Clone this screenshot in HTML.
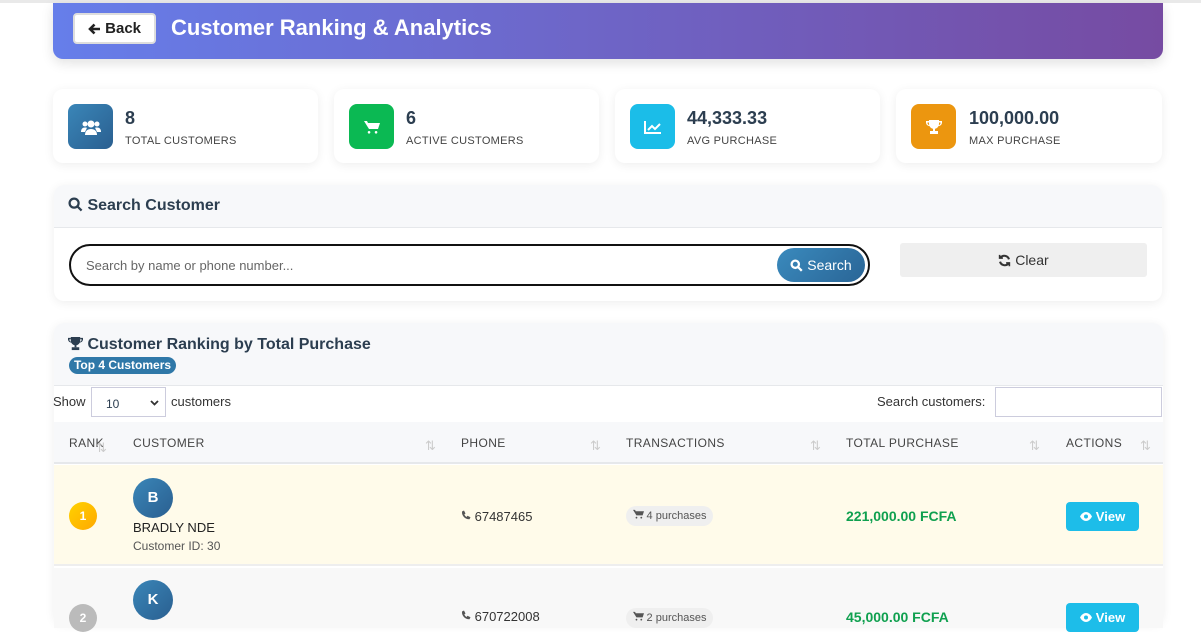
<!DOCTYPE html>
<html><head><meta charset="utf-8"><style>
*{box-sizing:border-box;margin:0;padding:0}
body{width:1201px;height:617px;overflow:hidden;background:#fff;font-family:"Liberation Sans",sans-serif;color:#2c3e50;position:relative}
.abs{position:absolute}
.hdr{left:53px;top:3px;width:1110px;height:56px;border-radius:0 0 10px 10px;background:linear-gradient(90deg,#667eea,#764ba2);box-shadow:0 4px 12px rgba(0,0,0,.12)}
.back{left:73px;top:13px;width:83px;height:31px;background:#fff;border:2px solid #ddd;border-radius:4px;font-weight:bold;font-size:15px;color:#222;display:flex;align-items:center;justify-content:center}
.title{left:171px;top:15px;color:#fff;font-weight:bold;font-size:22px}
.card{background:#fff;border-radius:10px;box-shadow:0 2px 10px rgba(0,0,0,.07)}
.ic{width:45px;height:45px;border-radius:8px;display:flex;align-items:center;justify-content:center}
.num{font-weight:bold;font-size:18px;color:#2c3e50}
.lbl{font-size:11px;color:#444;letter-spacing:.3px}
.th{font-size:12px;color:#444;letter-spacing:.4px;top:436px}
.sort{color:#ccc;font-size:13px;top:436px}
.view{width:73px;height:29px;border-radius:4px;background:#1dbde9;color:#fff;font-weight:bold;font-size:13px;display:flex;align-items:center;justify-content:center;gap:4px}
</style></head><body>
<div class="abs" style="left:0;top:0;width:1201px;height:3px;background:#e9e9e9"></div>
<div class="abs hdr"></div>
<div class="abs back"><svg width="13" height="12" viewBox="0 0 13 12" fill="none" stroke="#222" stroke-width="2.6"><path d="M12 6H2M6.5 1.5L2 6l4.5 4.5"/></svg>&nbsp;Back</div>
<div class="abs title">Customer Ranking &amp; Analytics</div>

<div class="abs card" style="left:53px;top:89px;width:265px;height:74px"></div>
<div class="abs card" style="left:334px;top:89px;width:265px;height:74px"></div>
<div class="abs card" style="left:615px;top:89px;width:265px;height:74px"></div>
<div class="abs card" style="left:896px;top:89px;width:266px;height:74px"></div>

<div class="abs ic" style="left:68px;top:104px;background:linear-gradient(135deg,#3a86b8,#2a5f90)"><svg width="20" height="16" viewBox="0 0 20 16" fill="#fff"><circle cx="10" cy="5" r="3.5"/><circle cx="4" cy="5" r="2.5"/><circle cx="16" cy="5" r="2.5"/><path d="M4 16c0-4 2.5-6 6-6s6 2 6 6z"/><path d="M0 13c0-3 1.5-4.5 4-4.5 1 0 2 .3 2 .3L4 13z"/><path d="M20 13c0-3-1.5-4.5-4-4.5-1 0-2 .3-2 .3l2 4.2z"/></svg></div>
<div class="abs ic" style="left:349px;top:104px;background:#0bb953"><svg width="16" height="14" viewBox="0 0 16 14" fill="#fff"><path d="M0 1h3l1 2h12l-2 6H5zM5 11a1.3 1.3 0 1 0 .1 0zM12 11a1.3 1.3 0 1 0 .1 0z"/></svg></div>
<div class="abs ic" style="left:630px;top:104px;background:#1bbde8"><svg width="18" height="14" viewBox="0 0 18 14" fill="none" stroke="#fff" stroke-width="2"><path d="M1 1v12h16"/><path d="M4 10l4-4 3 3 5-5"/></svg></div>
<div class="abs ic" style="left:911px;top:104px;background:#ec960f"><svg width="16" height="16" viewBox="0 0 16 16" fill="#fff"><path d="M3 1h10v4a5 5 0 0 1-10 0z"/><path d="M3 2H0v2a4 4 0 0 0 4 3V6A2 2 0 0 1 1.5 4V3.5H3zM13 2h3v2a4 4 0 0 1-4 3V6a2 2 0 0 0 2.5-2V3.5H13z"/><rect x="7" y="9" width="2" height="3"/><rect x="4" y="12" width="8" height="3"/></svg></div>

<div class="abs num" style="left:125px;top:108px">8</div><div class="abs lbl" style="left:125px;top:135px">TOTAL CUSTOMERS</div>
<div class="abs num" style="left:406px;top:108px">6</div><div class="abs lbl" style="left:406px;top:135px">ACTIVE CUSTOMERS</div>
<div class="abs num" style="left:687px;top:108px">44,333.33</div><div class="abs lbl" style="left:687px;top:135px">AVG PURCHASE</div>
<div class="abs num" style="left:969px;top:108px">100,000.00</div><div class="abs lbl" style="left:969px;top:135px">MAX PURCHASE</div>

<div class="abs card" style="left:54px;top:185px;width:1108px;height:116px;overflow:hidden">
 <div style="height:43px;background:#f7f8fa;border-bottom:1px solid #e6e8eb"></div>
</div>
<div class="abs" style="left:68px;top:197px;font-weight:bold;font-size:16px"><svg width="15" height="15" viewBox="0 0 16 16" style="vertical-align:-2px" fill="none" stroke="#2c3e50" stroke-width="2.4"><circle cx="6.5" cy="6.5" r="4.8"/><path d="M10 10l4.5 4.5"/></svg>&nbsp;Search Customer</div>
<div class="abs" style="left:69px;top:244px;width:801px;height:42px;border:2px solid #111;border-radius:21px;background:#fff"></div>
<div class="abs" style="left:86px;top:258px;font-size:13px;color:#666">Search by name or phone number...</div>
<div class="abs" style="left:777px;top:248px;width:88px;height:34px;border-radius:17px;background:linear-gradient(135deg,#3a8abd,#2a6596);color:#fff;font-size:14px;display:flex;align-items:center;justify-content:center"><svg width="13" height="13" viewBox="0 0 16 16" fill="none" stroke="#fff" stroke-width="2.8"><circle cx="6.5" cy="6.5" r="4.5"/><path d="M10 10l4.5 4.5"/></svg>&nbsp;Search</div>
<div class="abs" style="left:900px;top:243px;width:247px;height:34px;background:#efefef;border-radius:3px;font-size:14px;color:#333;display:flex;align-items:center;justify-content:center"><svg width="13" height="13" viewBox="0 0 16 16" fill="none" stroke="#333" stroke-width="2.6"><path d="M13.5 6.5A6 6 0 0 0 3 4.5M2.5 9.5A6 6 0 0 0 13 11.5"/><path d="M2 1v4h4M14 15v-4h-4" stroke-width="2"/></svg>&nbsp;Clear</div>

<div class="abs card" style="left:54px;top:323px;width:1109px;height:300px;overflow:hidden">
 <div style="height:63px;background:#f7f8fa;border-bottom:1px solid #e6e8eb"></div>
</div>
<div class="abs" style="left:68px;top:336px;font-weight:bold;font-size:16px"><svg width="15" height="15" viewBox="0 0 16 16" fill="#2c3e50" style="vertical-align:-2px"><path d="M3 1h10v4a5 5 0 0 1-10 0z"/><path d="M3 2H0v2a4 4 0 0 0 4 3V6A2 2 0 0 1 1.5 4V3.5H3zM13 2h3v2a4 4 0 0 1-4 3V6a2 2 0 0 0 2.5-2V3.5H13z"/><rect x="7" y="9" width="2" height="3"/><rect x="4" y="12" width="8" height="3"/></svg> Customer Ranking by Total Purchase</div>
<div class="abs" style="left:69px;top:357px;width:107px;height:17px;border-radius:9px;background:#2f78a8;color:#fff;font-weight:bold;font-size:12px;text-align:center;line-height:17px">Top 4 Customers</div>
<div class="abs" style="left:53px;top:394px;font-size:13px;color:#333">Show</div>
<div class="abs" style="left:91px;top:387px;width:75px;height:30px;border:1px solid #ccd;background:#fff;font-size:12px;padding:9px 0 0 14px">10<svg style="position:absolute;right:6px;top:12px" width="9" height="6" viewBox="0 0 9 6" fill="none" stroke="#333" stroke-width="1.8"><path d="M1 1l3.5 3.5L8 1"/></svg></div>
<div class="abs" style="left:171px;top:394px;font-size:13px;color:#333">customers</div>
<div class="abs" style="left:877px;top:394px;font-size:13px;color:#333">Search customers:</div>
<div class="abs" style="left:995px;top:387px;width:167px;height:30px;border:1px solid #ccd;background:#fff"></div>

<div class="abs" style="left:54px;top:422px;width:1109px;height:42px;background:#f7f8fa;border-bottom:2px solid #e6e8eb"></div>
<div class="abs th" style="left:69px">RANK</div>
<div class="abs th" style="left:133px">CUSTOMER</div>
<div class="abs th" style="left:461px">PHONE</div>
<div class="abs th" style="left:626px">TRANSACTIONS</div>
<div class="abs th" style="left:846px">TOTAL PURCHASE</div>
<div class="abs th" style="left:1066px">ACTIONS</div>
<div class="abs sort" style="left:96px;top:440px">⇅</div>
<div class="abs sort" style="left:425px;top:438px">⇅</div>
<div class="abs sort" style="left:590px;top:438px">⇅</div>
<div class="abs sort" style="left:810px;top:438px">⇅</div>
<div class="abs sort" style="left:1029px;top:438px">⇅</div>
<div class="abs sort" style="left:1140px;top:438px">⇅</div>

<div class="abs" style="left:54px;top:465px;width:1109px;height:101px;background:#fffbea;border-bottom:2px solid #eee"></div>
<div class="abs" style="left:69px;top:502px;width:28px;height:28px;border-radius:50%;background:linear-gradient(135deg,#ffd200,#ffa800);color:#fff;font-weight:bold;font-size:12px;text-align:center;line-height:28px">1</div>
<div class="abs" style="left:133px;top:478px;width:40px;height:40px;border-radius:50%;background:linear-gradient(135deg,#3a86b8,#2a5f90);color:#fff;font-weight:bold;font-size:15px;text-align:center;line-height:40px">B</div>
<div class="abs" style="left:133px;top:520px;font-size:13px;color:#222">BRADLY NDE</div>
<div class="abs" style="left:133px;top:539px;font-size:12px;color:#555">Customer ID: 30</div>
<div class="abs" style="left:461px;top:509px;font-size:13px;color:#333"><svg width="10" height="11" viewBox="0 0 10 11" fill="#555"><path d="M1 1.5L3 .5l1.5 3-1.2 1a6 6 0 0 0 2.2 2.5l1-1.2 3 1.5-1 2C4 9.5 .5 5.5 1 1.5z"/></svg> 67487465</div>
<div class="abs" style="left:626px;top:506px;width:87px;height:20px;border-radius:10px;background:#efefef;font-size:11px;color:#555;text-align:center;line-height:20px"><svg width="11" height="10" viewBox="0 0 16 14" fill="#555"><path d="M0 1h3l1 2h12l-2 6H5zM5 11a1.3 1.3 0 1 0 .1 0zM12 11a1.3 1.3 0 1 0 .1 0z"/></svg> 4 purchases</div>
<div class="abs" style="left:846px;top:508px;font-weight:bold;font-size:14px;color:#0fa04f">221,000.00 FCFA</div>
<div class="abs view" style="left:1066px;top:502px"><svg width="12" height="9" viewBox="0 0 12 9" fill="#fff"><path d="M0 4.5C1.5 1.5 4 0 6 0s4.5 1.5 6 4.5C10.5 7.5 8 9 6 9S1.5 7.5 0 4.5z"/><circle cx="6" cy="4.5" r="2" fill="#1dbde9"/></svg>View</div>

<div class="abs" style="left:54px;top:568px;width:1109px;height:60px;background:#f8f8f8"></div>
<div class="abs" style="left:69px;top:604px;width:28px;height:28px;border-radius:50%;background:#bbb;color:#fff;font-weight:bold;font-size:12px;text-align:center;line-height:28px">2</div>
<div class="abs" style="left:133px;top:580px;width:40px;height:40px;border-radius:50%;background:linear-gradient(135deg,#3a86b8,#2a5f90);color:#fff;font-weight:bold;font-size:15px;text-align:center;line-height:40px">K</div>
<div class="abs" style="left:461px;top:609px;font-size:13px;color:#333"><svg width="10" height="11" viewBox="0 0 10 11" fill="#555"><path d="M1 1.5L3 .5l1.5 3-1.2 1a6 6 0 0 0 2.2 2.5l1-1.2 3 1.5-1 2C4 9.5 .5 5.5 1 1.5z"/></svg> 670722008</div>
<div class="abs" style="left:626px;top:608px;width:87px;height:20px;border-radius:10px;background:#efefef;font-size:11px;color:#555;text-align:center;line-height:20px"><svg width="11" height="10" viewBox="0 0 16 14" fill="#555"><path d="M0 1h3l1 2h12l-2 6H5zM5 11a1.3 1.3 0 1 0 .1 0zM12 11a1.3 1.3 0 1 0 .1 0z"/></svg> 2 purchases</div>
<div class="abs" style="left:846px;top:609px;font-weight:bold;font-size:14px;color:#0fa04f">45,000.00 FCFA</div>
<div class="abs view" style="left:1066px;top:603px"><svg width="12" height="9" viewBox="0 0 12 9" fill="#fff"><path d="M0 4.5C1.5 1.5 4 0 6 0s4.5 1.5 6 4.5C10.5 7.5 8 9 6 9S1.5 7.5 0 4.5z"/><circle cx="6" cy="4.5" r="2" fill="#1dbde9"/></svg>View</div>
</body></html>
